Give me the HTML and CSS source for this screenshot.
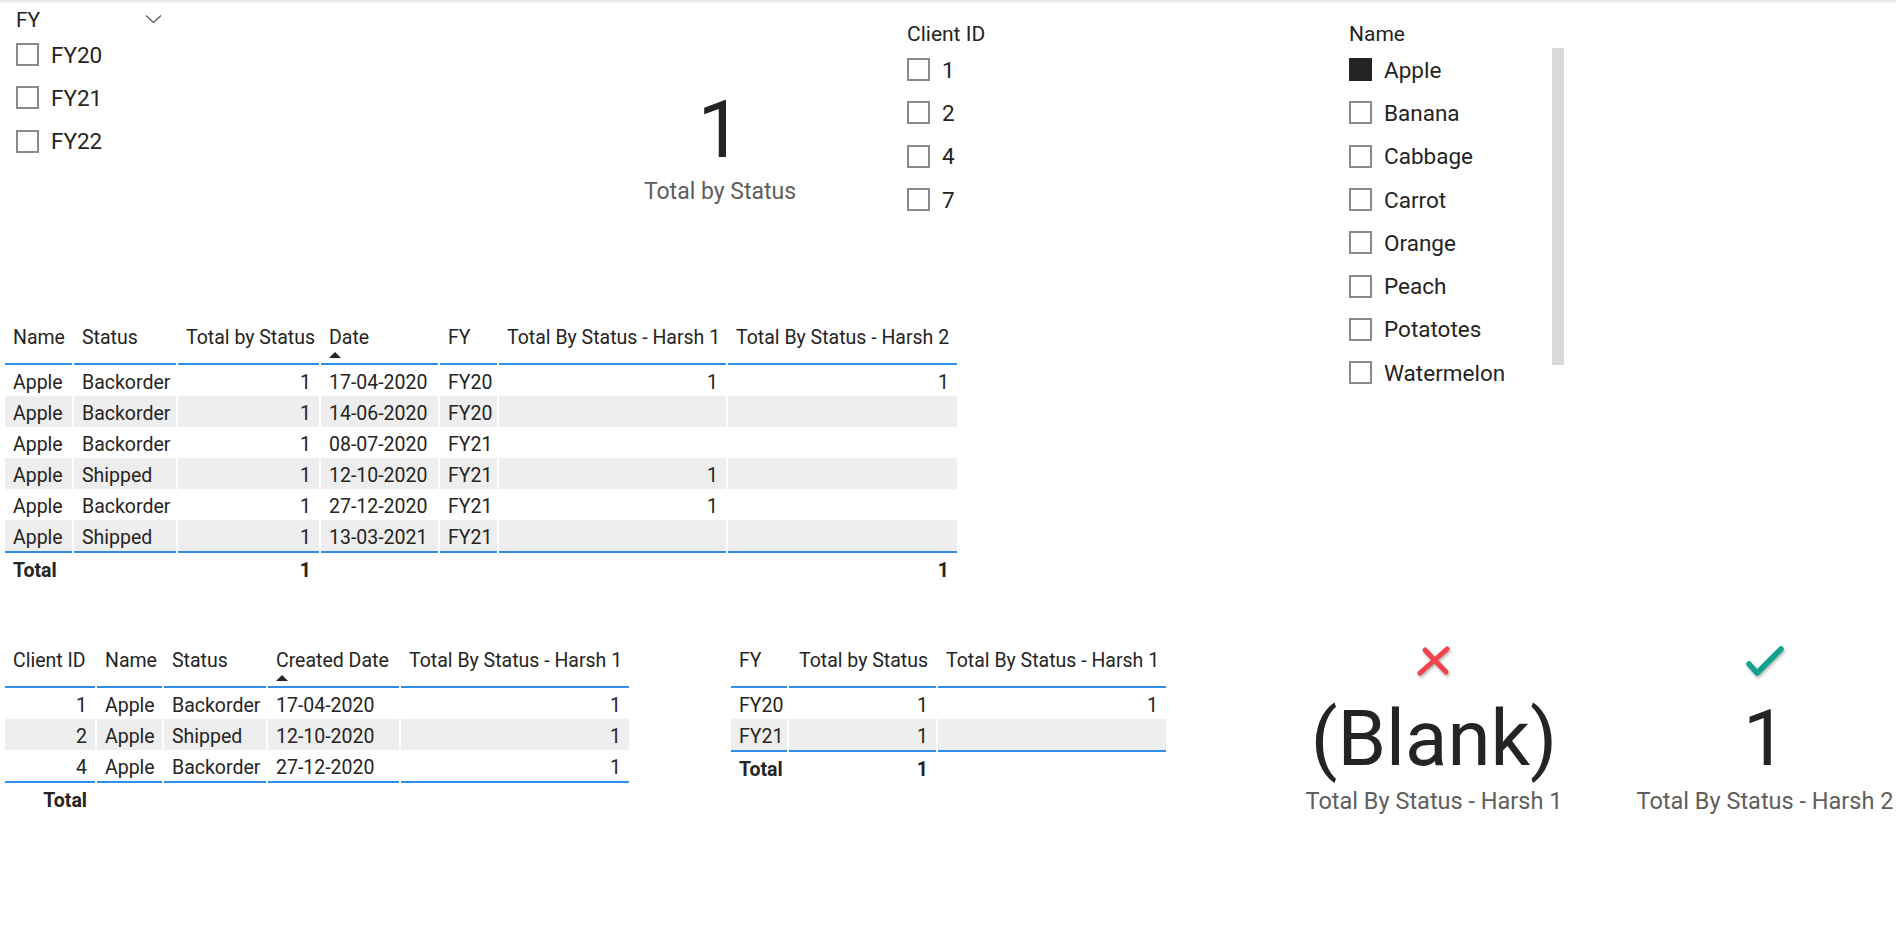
FILE: index.html
```html
<!DOCTYPE html>
<html lang="en">
<head>
    <meta charset="UTF-8">
    <title>Total by Status report</title>
    <link rel="stylesheet" href="styles.css">
</head>
<body>
<div class="report">
    <div class="top">
        <section class="slicer slicer-fy">
            <div class="slicer-head">
                <span>FY</span>
                <svg class="chevron" width="17" height="10" viewBox="0 0 17 10"><polyline points="1,1.5 8.5,8.5 16,1.5" fill="none" stroke="#605e5c" stroke-width="1.3"/></svg>
            </div>
            <ul class="slicer-list">
                <li><span class="box"></span>FY20</li>
                <li><span class="box"></span>FY21</li>
                <li><span class="box"></span>FY22</li>
            </ul>
        </section>

        <section class="card card-main">
            <div class="card-value">1</div>
            <div class="card-label">Total by Status</div>
        </section>

        <section class="slicer slicer-client">
            <div class="slicer-head"><span>Client ID</span></div>
            <ul class="slicer-list">
                <li><span class="box"></span>1</li>
                <li><span class="box"></span>2</li>
                <li><span class="box"></span>4</li>
                <li><span class="box"></span>7</li>
            </ul>
        </section>

        <section class="slicer slicer-name">
            <div class="slicer-head"><span>Name</span></div>
            <div class="scroll-wrap">
                <ul class="slicer-list">
                    <li><span class="box checked"></span>Apple</li>
                    <li><span class="box"></span>Banana</li>
                    <li><span class="box"></span>Cabbage</li>
                    <li><span class="box"></span>Carrot</li>
                    <li><span class="box"></span>Orange</li>
                    <li><span class="box"></span>Peach</li>
                    <li><span class="box"></span>Potatotes</li>
                    <li><span class="box"></span>Watermelon</li>
                </ul>
                <div class="scroll-thumb"></div>
            </div>
        </section>

        <section class="visual-table table-main">
            <table>
                <colgroup>
                    <col style="width:67px"><col style="width:102px"><col style="width:141px"><col style="width:117px"><col style="width:57px"><col style="width:227px"><col style="width:229px">
                </colgroup>
                <thead>
                    <tr>
                        <th>Name</th>
                        <th>Status</th>
                        <th class="num">Total by Status</th>
                        <th class="sorted">Date</th>
                        <th>FY</th>
                        <th class="num">Total By Status - Harsh 1</th>
                        <th class="num">Total By Status - Harsh 2</th>
                    </tr>
                </thead>
                <tbody>
                    <tr><td>Apple</td><td>Backorder</td><td class="num">1</td><td>17-04-2020</td><td>FY20</td><td class="num">1</td><td class="num">1</td></tr>
                    <tr><td>Apple</td><td>Backorder</td><td class="num">1</td><td>14-06-2020</td><td>FY20</td><td class="num"></td><td class="num"></td></tr>
                    <tr><td>Apple</td><td>Backorder</td><td class="num">1</td><td>08-07-2020</td><td>FY21</td><td class="num"></td><td class="num"></td></tr>
                    <tr><td>Apple</td><td>Shipped</td><td class="num">1</td><td>12-10-2020</td><td>FY21</td><td class="num">1</td><td class="num"></td></tr>
                    <tr><td>Apple</td><td>Backorder</td><td class="num">1</td><td>27-12-2020</td><td>FY21</td><td class="num">1</td><td class="num"></td></tr>
                    <tr><td>Apple</td><td>Shipped</td><td class="num">1</td><td>13-03-2021</td><td>FY21</td><td class="num"></td><td class="num"></td></tr>
                </tbody>
                <tfoot>
                    <tr><td>Total</td><td></td><td class="num">1</td><td></td><td></td><td></td><td class="num">1</td></tr>
                </tfoot>
            </table>
        </section>
    </div>

    <div class="bottom">
        <section class="visual-table table-client">
            <table>
                <colgroup>
                    <col style="width:90px"><col style="width:65px"><col style="width:102px"><col style="width:131px"><col style="width:228px">
                </colgroup>
                <thead>
                    <tr>
                        <th>Client ID</th>
                        <th>Name</th>
                        <th>Status</th>
                        <th class="sorted">Created Date</th>
                        <th class="num">Total By Status - Harsh 1</th>
                    </tr>
                </thead>
                <tbody>
                    <tr><td class="num">1</td><td>Apple</td><td>Backorder</td><td>17-04-2020</td><td class="num">1</td></tr>
                    <tr><td class="num">2</td><td>Apple</td><td>Shipped</td><td>12-10-2020</td><td class="num">1</td></tr>
                    <tr><td class="num">4</td><td>Apple</td><td>Backorder</td><td>27-12-2020</td><td class="num">1</td></tr>
                </tbody>
                <tfoot>
                    <tr><td class="num">Total</td><td></td><td></td><td></td><td></td></tr>
                </tfoot>
            </table>
        </section>

        <section class="visual-table table-fy">
            <table>
                <colgroup>
                    <col style="width:56px"><col style="width:147px"><col style="width:228px">
                </colgroup>
                <thead>
                    <tr>
                        <th>FY</th>
                        <th class="num">Total by Status</th>
                        <th class="num">Total By Status - Harsh 1</th>
                    </tr>
                </thead>
                <tbody>
                    <tr><td>FY20</td><td class="num">1</td><td class="num">1</td></tr>
                    <tr><td>FY21</td><td class="num">1</td><td class="num"></td></tr>
                </tbody>
                <tfoot>
                    <tr><td>Total</td><td class="num">1</td><td></td></tr>
                </tfoot>
            </table>
        </section>

        <section class="card card-check card-bad">
            <svg class="mark" width="36" height="32" viewBox="0 0 36 32">
                <line x1="9" y1="5" x2="30" y2="27" stroke="#f2434a" stroke-width="5" stroke-linecap="round"/>
                <line x1="31" y1="4" x2="4" y2="28" stroke="#f2434a" stroke-width="5" stroke-linecap="round"/>
            </svg>
            <div class="card-value">(Blank)</div>
            <div class="card-label">Total By Status - Harsh 1</div>
        </section>

        <section class="card card-check card-good">
            <svg class="mark" width="40" height="32" viewBox="0 0 40 32">
                <polyline points="4,19 12,28 36,4" fill="none" stroke="#13a38d" stroke-width="5.5" stroke-linecap="round" stroke-linejoin="round"/>
            </svg>
            <div class="card-value">1</div>
            <div class="card-label">Total By Status - Harsh 2</div>
        </section>
    </div>
</div>
</body>
</html>
```

FILE: styles.css
```css
body {
    margin: 0;
    font-family: Roboto, "Noto Sans", sans-serif;
    color: #252423;
    background: linear-gradient(#e6e6e6, #ffffff 4px) no-repeat;
    background-color: #ffffff;
}
ul {
    list-style: none;
    margin: 0;
    padding: 0;
}

/* canvas */
.top {
    display: grid;
    grid-template-columns: 555px 320px 450px 1fr;
    grid-template-rows: 318px 290px;
    padding-left: 5px;
}
.slicer-fy { grid-column: 1; grid-row: 1; padding-left: 11px; }
.card-main { grid-column: 2; grid-row: 1; }
.slicer-client { grid-column: 3; grid-row: 1; padding-left: 27px; }
.slicer-name { grid-column: 4; grid-row: 1 / span 2; padding-left: 19px; }
.table-main { grid-column: 1 / span 3; grid-row: 2; }

.bottom {
    display: flex;
    align-items: flex-start;
    padding: 33px 0 0 5px;
}
.table-fy { margin-left: 100px; }
.card-bad { margin-left: 136px; }
.card-good { margin-left: 71px; }

/* slicers */
.slicer-head {
    font-size: 21px;
    line-height: 24px;
    padding-top: 22px;
    height: 26px;
}
.slicer-fy .slicer-head {
    display: flex;
    justify-content: space-between;
    align-items: center;
    width: 146px;
    padding-top: 7px;
    height: 26px;
}
.chevron {
    margin-top: -2px;
}
.slicer-list li {
    display: flex;
    align-items: center;
    gap: 12px;
    height: 43.3px;
    font-size: 22.5px;
}
.box {
    width: 19px;
    height: 19px;
    border: 2px solid #8a8a8a;
    flex-shrink: 0;
}
.box.checked {
    background: #252423;
    border-color: #252423;
}
.scroll-wrap {
    display: flex;
    width: 215px;
}
.scroll-wrap .slicer-list {
    flex: 1;
}
.scroll-thumb {
    width: 12px;
    height: 317px;
    background: #d9d9d9;
}

/* cards */
.card {
    text-align: center;
}
.card-main {
    padding-top: 90px;
}
.card-value {
    font-size: 80px;
    line-height: 80px;
}
.card-main .card-label {
    margin-top: 8px;
    font-size: 23px;
    line-height: 28px;
    color: #605e5c;
}
.card-check {
    width: 260px;
}
.card-check .mark {
    display: block;
    margin: 4px auto 0;
    filter: drop-shadow(1px 2px 1.5px rgba(0, 0, 0, 0.3));
}
.card-check .card-value {
    margin-top: 23px;
    font-size: 78px;
    line-height: 78px;
}
.card-check .card-label {
    margin-top: 9px;
    font-size: 23.5px;
    line-height: 28px;
    color: #605e5c;
    white-space: nowrap;
}

/* tables */
.visual-table table {
    border-collapse: separate;
    border-spacing: 2px 0;
    table-layout: fixed;
    margin-left: -2px;
    font-size: 19.5px;
}
.table-main table { width: 956px; }
.table-client table { width: 628px; }
.table-fy table { width: 439px; }
.visual-table th {
    position: relative;
    font-weight: normal;
    text-align: left;
    vertical-align: top;
    white-space: nowrap;
    line-height: 24px;
    padding: 8px 8px 13px;
    border-bottom: 2px solid #2f8fe8;
}
.visual-table td {
    white-space: nowrap;
    height: 27px;
    line-height: 27px;
    padding: 4px 8px 0;
}
.visual-table tbody tr:nth-child(even) td {
    background: #eeeeee;
}
.visual-table tbody tr:last-child td {
    border-bottom: 2px solid #2f8fe8;
}
.visual-table tfoot td {
    font-weight: bold;
}
.visual-table .num {
    text-align: right;
}
.sorted::after {
    content: "";
    position: absolute;
    left: 8px;
    bottom: 5px;
    border-left: 6px solid transparent;
    border-right: 6px solid transparent;
    border-bottom: 6px solid #252423;
}
```
